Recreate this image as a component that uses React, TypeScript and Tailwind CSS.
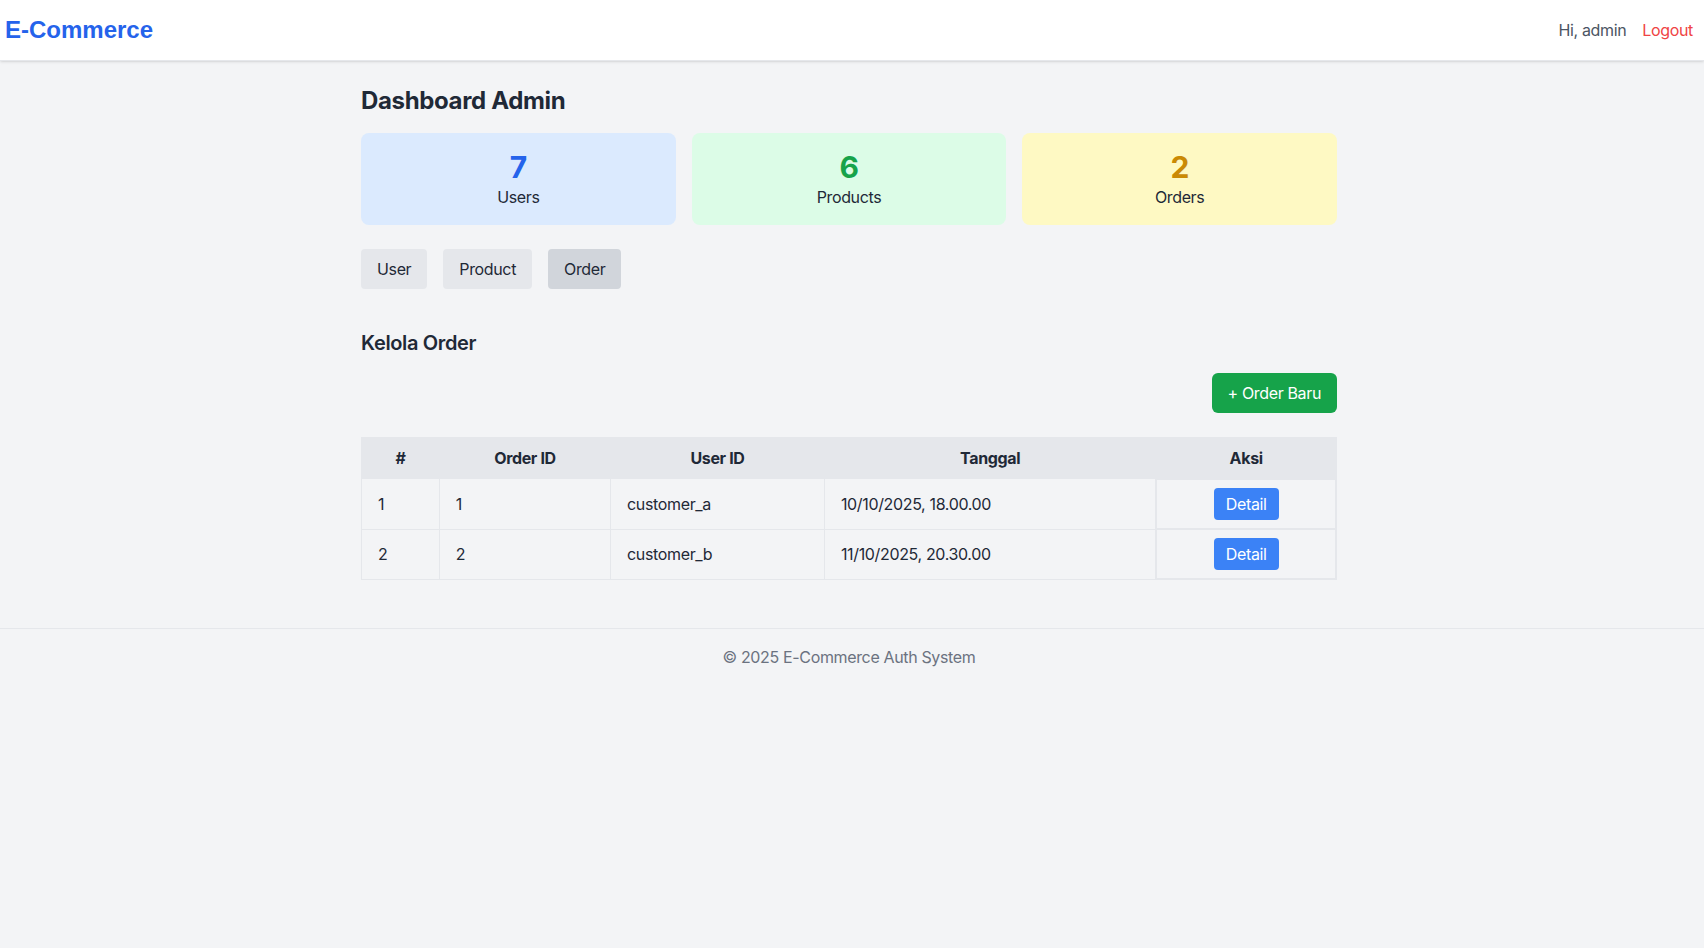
import { useState } from "react";

interface IStat {
  label: string;
  value: number;
  box: string;
  number: string;
}

interface IOrder {
  id: number;
  userId: string;
  date: string;
}

const stats: IStat[] = [
  { label: "Users", value: 7, box: "bg-[#dbeafe]", number: "text-[#2563eb]" },
  { label: "Products", value: 6, box: "bg-[#dcfce7]", number: "text-[#16a34a]" },
  { label: "Orders", value: 2, box: "bg-[#fef9c3]", number: "text-[#ca8a04]" },
];

const orders: IOrder[] = [
  { id: 1, userId: "customer_a", date: "10/10/2025, 18.00.00" },
  { id: 2, userId: "customer_b", date: "11/10/2025, 20.30.00" },
];

const tabs = ["User", "Product", "Order"];

export default function App() {
  const [activeTab, setActiveTab] = useState("Order");

  return (
    <div className="min-h-screen bg-[#f3f4f6] text-[#1f2937] font-['Inter',sans-serif] tracking-[-0.022em]">
      <header className="h-[61px] bg-white border-b border-[#e5e7eb] shadow-sm flex items-center justify-between pl-[5px] pr-[11px]">
        <span className="text-2xl font-bold tracking-normal text-[#2563eb] font-['Liberation_Sans',Arial,sans-serif]">
          E-Commerce
        </span>
        <nav className="flex items-center gap-4">
          <span className="text-[#4b5563]">Hi, admin</span>
          <button className="text-[#ef4444]">Logout</button>
        </nav>
      </header>

      <div className="pr-[6px]">
        <main className="w-[976px] mx-auto pt-6 pb-12">
          <h1 className="text-2xl font-bold mb-4">Dashboard Admin</h1>

          <section className="grid grid-cols-3 gap-4 mb-6">
            {stats.map((stat) => (
              <article key={stat.label} className={`${stat.box} rounded-lg p-4 text-center`}>
                <p className={`text-3xl font-bold ${stat.number}`}>{stat.value}</p>
                <p>{stat.label}</p>
              </article>
            ))}
          </section>

          <section className="flex gap-4">
            {tabs.map((tab) => (
              <button
                key={tab}
                onClick={() => setActiveTab(tab)}
                className={`px-4 py-2 rounded ${activeTab === tab ? "bg-[#d1d5db]" : "bg-[#e5e7eb]"}`}
              >
                {tab}
              </button>
            ))}
          </section>

          <section className="mt-10">
            <h2 className="text-xl font-semibold mb-4">Kelola Order</h2>

            <div className="flex justify-end mb-6">
              <button className="bg-[#16a34a] text-white px-4 py-2 rounded-md">+ Order Baru</button>
            </div>

            <table className="w-full border-collapse border border-[#e5e7eb]">
              <thead className="bg-[#e5e7eb]">
                <tr>
                  <th className="border border-[#e5e7eb] px-4 py-2">#</th>
                  <th className="border border-[#e5e7eb] px-4 py-2">Order ID</th>
                  <th className="border border-[#e5e7eb] px-4 py-2">User ID</th>
                  <th className="border border-[#e5e7eb] px-4 py-2">Tanggal</th>
                  <th className="border border-[#e5e7eb] px-4 py-2">Aksi</th>
                </tr>
              </thead>
              <tbody>
                {orders.map((order, i) => (
                  <tr key={order.id}>
                    <td className="border border-[#e5e7eb] px-4 py-2">{i + 1}</td>
                    <td className="border border-[#e5e7eb] px-4 py-2">{order.id}</td>
                    <td className="border border-[#e5e7eb] px-4 py-2">{order.userId}</td>
                    <td className="border border-[#e5e7eb] px-4 py-2">{order.date}</td>
                    <td className="border border-[#e5e7eb] px-4 py-2 flex justify-center">
                      <button className="bg-[#3b82f6] text-white px-3 py-1 rounded">Detail</button>
                    </td>
                  </tr>
                ))}
              </tbody>
            </table>
          </section>
        </main>
      </div>

      <footer className="border-t border-[#e5e7eb] py-4 pr-[6px] text-center text-[#6b7280]">
        © 2025 E-Commerce Auth System
      </footer>
    </div>
  );
}
